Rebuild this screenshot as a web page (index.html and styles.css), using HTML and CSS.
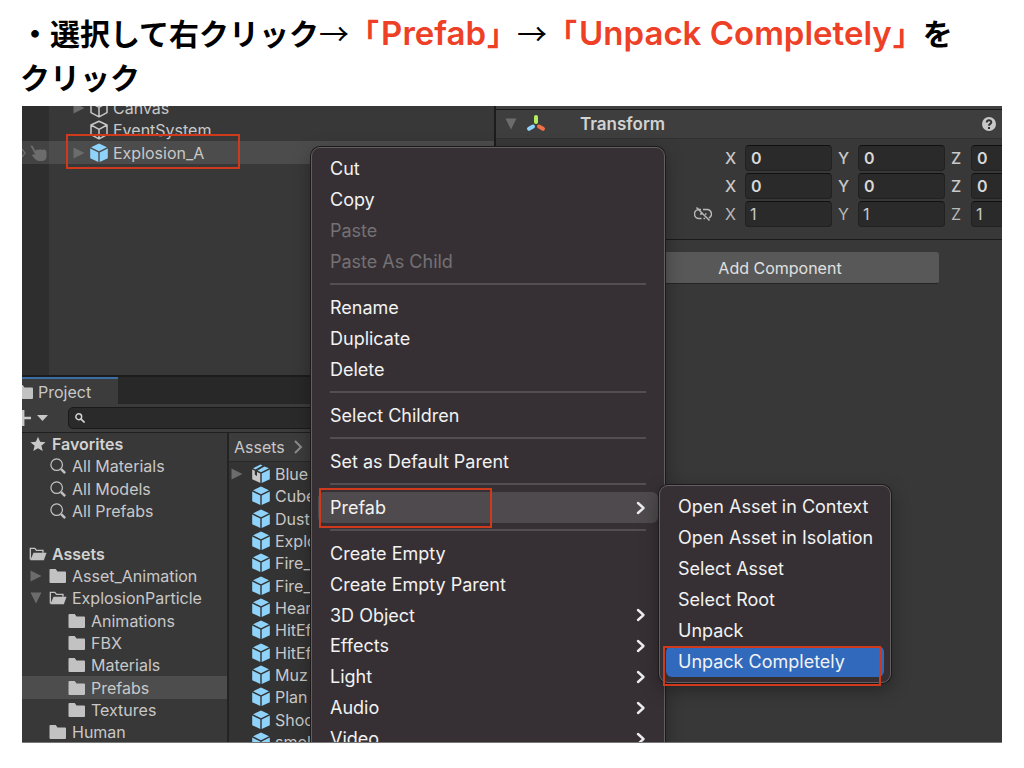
FILE: index.html
```html
<!DOCTYPE html>
<html lang="ja">
<head>
<meta charset="utf-8">
<meta name="viewport" content="width=device-width, initial-scale=1">
<title>Prefab Unpack</title>
<link rel="stylesheet" href="styles.css">
</head>
<body>
<svg class="sprite" aria-hidden="true">
  <symbol id="cube" viewBox="0 0 18 20"><path fill="#8fd3fb" d="M9 .5 17 4.3 9 8.2 1 4.3zM.2 5.6 8.3 9.5V19L.2 15.2zM17.8 5.6 9.7 9.5V19l8.1-3.8z"/></symbol>
  <symbol id="cube-line" viewBox="0 0 18 20"><path fill="none" stroke="#c8c8c8" stroke-width="1.5" stroke-linejoin="round" d="M9 1.2 17 5v9.6L9 18.8 1 14.6V5zM1 5l8 4.3L17 5M9 9.3v9.5"/></symbol>
  <symbol id="cube-model" viewBox="0 0 18 20"><path fill="#c8c8c8" d="M.2 5.600 2.800 6.800v4l2.200 1.200V8l3.300 1.500V19L.2 15.200z"/><path fill="#8fd3fb" d="M1 4.300 8.500.5l2 1L3.500 5.500zM5.500 6.400 12.500 2.400 17 4.300 9 8.200zM17.800 5.600 9.700 9.500V19l8.100-3.800z"/></symbol>
  <symbol id="folder" viewBox="0 0 18 16"><path fill="#c2c2c2" d="M1.500 1h5.200l1.800 2.500h7.500a1 1 0 0 1 1 1V14a1 1 0 0 1-1 1H1.500a1 1 0 0 1-1-1V2a1 1 0 0 1 1-1z"/></symbol>
  <symbol id="folder-open" viewBox="0 0 20 16"><path fill="none" stroke="#c2c2c2" stroke-width="1.500" d="M1.500 14V1.800h5l1.800 2.200h7.200v2.500"/><path fill="#c2c2c2" d="M5 6.500h14.500L16.500 15H1.500z"/></symbol>
  <symbol id="lens" viewBox="0 0 18 18"><circle cx="7.500" cy="7.500" r="6.500" fill="none" stroke="#c2c2c2" stroke-width="1.400"/><path stroke="#c2c2c2" stroke-width="2.800" d="m12.500 12.500 4.500 4.500"/></symbol>
  <symbol id="right" viewBox="0 0 12 12"><path fill="#6c6c6c" d="M.5.5 11.500 6 .5 11.500z"/></symbol>
  <symbol id="down" viewBox="0 0 12 12"><path fill="#6c6c6c" d="M.5.5h11L6 11.500z"/></symbol>
  <symbol id="chevron" viewBox="0 0 10 14"><path fill="none" stroke="#ececec" stroke-width="2.400" stroke-linecap="round" stroke-linejoin="round" d="m2 2 5.500 5L2 12"/></symbol>
</svg>

<h1 class="title">・選択して右クリック<span class="arrow">→</span><span class="key">「<span class="latin">Prefab</span>」</span><span class="arrow">→</span><span class="key">「<span class="latin">Unpack Completely</span>」</span>を<br>クリック</h1>

<main class="editor">
  <div class="left">
    <section class="hierarchy">
      <div class="row h-row"><span class="gutter"></span><svg class="tri"><use href="#right"/></svg><svg class="ico"><use href="#cube-line"/></svg>Canvas</div>
      <div class="row h-row"><span class="gutter"></span><span class="tri"></span><svg class="ico"><use href="#cube-line"/></svg>EventSystem</div>
      <div class="row h-row on"><span class="gutter"><svg width="28" height="20" viewBox="0 0 28 20"><path fill="none" stroke="#6c6c6c" stroke-width="1.400" d="m0 6 3 4-3 4"/><path fill="#6c6c6c" d="M8.500 3c1-1 2-.5 2.500.5l2.500 4.500 1-1.500 2 .5 1.500-1 1.500 1 2-.5c2 0 3 1 3 3v4c0 3-2 4.500-5 4.500h-2c-3 0-5-2-7.500-6 1-1 2-1 3.500 0z"/></svg></span><svg class="tri"><use href="#right"/></svg><svg class="ico"><use href="#cube"/></svg>Explosion_A</div>
    </section>

    <section class="project">
      <div class="tabs"><div class="tab"><svg class="tab-ico"><use href="#folder"/></svg>Project</div></div>
      <div class="toolbar">
        <button class="add" aria-label="Add"><svg width="28" height="18" viewBox="0 0 28 18"><path stroke="#c8c8c8" stroke-width="2.400" d="M0 9h9M1.200 1v16"/><path fill="#c8c8c8" d="M15 6h11l-5.500 6z"/></svg></button>
        <label class="search"><svg width="10" height="10" viewBox="0 0 12 12"><circle cx="4.500" cy="4.500" r="3.500" fill="none" stroke="#d0d0d0" stroke-width="1.800"/><path stroke="#d0d0d0" stroke-width="2" d="m7 7 4.500 4.500"/></svg><input type="text" aria-label="Search"></label>
      </div>
      <div class="panes">
        <div class="tree">
          <div class="row head"><svg class="ico" viewBox="0 0 18 18"><path fill="#c8c8c8" d="m9 .8 2.400 5.700 6.100.5-4.700 4 1.500 6L9 13.800 3.700 17l1.500-6L.5 7l6.100-.5z"/></svg>Favorites</div>
          <div class="row lv1"><svg class="ico"><use href="#lens"/></svg>All Materials</div>
          <div class="row lv1"><svg class="ico"><use href="#lens"/></svg>All Models</div>
          <div class="row lv1"><svg class="ico"><use href="#lens"/></svg>All Prefabs</div>
          <div class="row blank"></div>
          <div class="row head"><svg class="ico"><use href="#folder-open"/></svg>Assets</div>
          <div class="row lv1 fold"><svg class="tri"><use href="#right"/></svg><svg class="ico"><use href="#folder"/></svg>Asset_Animation</div>
          <div class="row lv1 fold"><svg class="tri"><use href="#down"/></svg><svg class="ico"><use href="#folder-open"/></svg>ExplosionParticle</div>
          <div class="row lv2"><svg class="ico"><use href="#folder"/></svg>Animations</div>
          <div class="row lv2"><svg class="ico"><use href="#folder"/></svg>FBX</div>
          <div class="row lv2"><svg class="ico"><use href="#folder"/></svg>Materials</div>
          <div class="row lv2 on"><svg class="ico"><use href="#folder"/></svg>Prefabs</div>
          <div class="row lv2"><svg class="ico"><use href="#folder"/></svg>Textures</div>
          <div class="row lv1"><svg class="ico"><use href="#folder"/></svg>Human</div>
        </div>
        <div class="assets">
          <div class="crumb">Assets <svg width="10" height="14" viewBox="0 0 10 14"><path fill="none" stroke="#8c8c8c" stroke-width="2" d="m2 1 6 6-6 6"/></svg></div>
          <div class="list">
            <div class="row"><svg class="tri"><use href="#right"/></svg><svg class="ico"><use href="#cube-model"/></svg>Blue</div>
            <div class="row"><span class="tri"></span><svg class="ico"><use href="#cube"/></svg>Cube</div>
            <div class="row"><span class="tri"></span><svg class="ico"><use href="#cube"/></svg>Dust</div>
            <div class="row"><span class="tri"></span><svg class="ico"><use href="#cube"/></svg>Explo</div>
            <div class="row"><span class="tri"></span><svg class="ico"><use href="#cube"/></svg>Fire_</div>
            <div class="row"><span class="tri"></span><svg class="ico"><use href="#cube"/></svg>Fire_</div>
            <div class="row"><span class="tri"></span><svg class="ico"><use href="#cube"/></svg>Hear</div>
            <div class="row"><span class="tri"></span><svg class="ico"><use href="#cube"/></svg>HitEf</div>
            <div class="row"><span class="tri"></span><svg class="ico"><use href="#cube"/></svg>HitEf</div>
            <div class="row"><span class="tri"></span><svg class="ico"><use href="#cube"/></svg>Muz</div>
            <div class="row"><span class="tri"></span><svg class="ico"><use href="#cube"/></svg>Plan</div>
            <div class="row"><span class="tri"></span><svg class="ico"><use href="#cube"/></svg>Shoo</div>
            <div class="row"><span class="tri"></span><svg class="ico"><use href="#cube"/></svg>smol</div>
          </div>
        </div>
      </div>
    </section>
  </div>

  <section class="inspector">
    <header class="component">
      <svg class="tri"><use href="#down"/></svg>
      <svg class="axes" width="20" height="20" viewBox="0 0 20 20"><g stroke-width="4" stroke-linecap="round"><path stroke="#b5ee5c" d="M10 3v5"/><path stroke="#8fd3fb" d="m7 12.500-4 2.300"/><path stroke="#f07048" d="m13 12.500 4 2.300"/></g></svg>
      <h2>Transform</h2>
      <svg class="help" width="14" height="14" viewBox="0 0 14 14"><circle cx="7" cy="7" r="7" fill="#c8c8c8"/><path fill="none" stroke="#333" stroke-width="2" d="M4.700 5.500c0-3 4.600-3 4.600-.3C9.300 7 7 6.800 7 8.800M7 10v2"/></svg>
    </header>
    <div class="fields">
      <div class="vec strong"><span class="link"></span>
        <label>X<input value="0"></label><label>Y<input value="0"></label><label>Z<input value="0"></label></div>
      <div class="vec strong"><span class="link"></span>
        <label>X<input value="0"></label><label>Y<input value="0"></label><label>Z<input value="0"></label></div>
      <div class="vec"><svg class="link" viewBox="0 0 18 14"><path fill="none" stroke="#b8b8b8" stroke-width="1.500" d="M7 2.500H5a4.500 4.500 0 0 0 0 9h2.500M9 2.500h4a4.500 4.500 0 0 1 2 8.500M11 11.500H9.500M6 7h2M11 7h1.500M2.500.5l13 13"/></svg>
        <label>X<input value="1"></label><label>Y<input value="1"></label><label>Z<input value="1"></label></div>
    </div>
    <button class="add-component">Add Component</button>
  </section>

  <div class="menu context" role="menu">
    <button role="menuitem">Cut</button>
    <button role="menuitem">Copy</button>
    <button role="menuitem" disabled>Paste</button>
    <button role="menuitem" disabled>Paste As Child</button>
    <hr>
    <button role="menuitem">Rename</button>
    <button role="menuitem">Duplicate</button>
    <button role="menuitem">Delete</button>
    <hr>
    <button role="menuitem">Select Children</button>
    <hr>
    <button role="menuitem">Set as Default Parent</button>
    <hr>
    <button role="menuitem" class="open">Prefab<svg><use href="#chevron"/></svg></button>
    <hr>
    <button role="menuitem">Create Empty</button>
    <button role="menuitem">Create Empty Parent</button>
    <button role="menuitem">3D Object<svg><use href="#chevron"/></svg></button>
    <button role="menuitem">Effects<svg><use href="#chevron"/></svg></button>
    <button role="menuitem">Light<svg><use href="#chevron"/></svg></button>
    <button role="menuitem">Audio<svg><use href="#chevron"/></svg></button>
    <button role="menuitem">Video<svg><use href="#chevron"/></svg></button>
  </div>

  <div class="menu submenu" role="menu">
    <button role="menuitem">Open Asset in Context</button>
    <button role="menuitem">Open Asset in Isolation</button>
    <button role="menuitem">Select Asset</button>
    <button role="menuitem">Select Root</button>
    <button role="menuitem">Unpack</button>
    <button role="menuitem" class="active">Unpack Completely</button>
  </div>

  <div class="mark mark-object"></div>
  <div class="mark mark-prefab"></div>
  <div class="mark mark-unpack"></div>
</main>
</body>
</html>
```
FILE: styles.css
```css
* { box-sizing: border-box; }

body {
  margin: 0;
  padding: 10px 22px 25px;
  height: 100vh;
  display: flex;
  flex-direction: column;
  background: #fff;
  font-family: Inter, "Noto Sans CJK JP", sans-serif;
}

button, input { font: inherit; color: inherit; }
svg { flex: none; }
.sprite { position: absolute; width: 0; height: 0; }

.title {
  margin: 0 0 0 -2px;
  height: 96px;
  font: 700 30px/44px "Noto Sans CJK JP", sans-serif;
  color: #000;
  white-space: nowrap;
}
.arrow { font-weight: 400; }
.key { color: #ee4026; }
.latin { margin: 0 1px 0 2px; font-family: Inter, sans-serif; font-size: 33px; font-weight: 600; line-height: 1; }

.editor {
  flex: 1;
  min-height: 0;
  position: relative;
  overflow: hidden;
  display: grid;
  grid-template-columns: 474px 1fr;
  grid-template-rows: 100%;
  background: #383838;
  color: #c8c8c8;
  font-size: 16px;
  border-bottom: 1px solid #777;
}

.left { display: flex; flex-direction: column; min-height: 0; border-right: 2px solid #1c1c1c; }

.row { height: 22px; display: flex; align-items: center; white-space: nowrap; }
.row:nth-child(3n) { height: 23px; }
.ico { width: 18px; height: 20px; }
.tri { width: 12px; height: 12px; flex: none; }

.hierarchy {
  height: 271px;
  flex: none;
  overflow: hidden;
  background: linear-gradient(to right, #2e2e2e 27px, #383838 27px);
  border-bottom: 2px solid #1c1c1c;
}
.h-row { gap: 5px; }
.h-row:first-child { margin-top: -9px; }
.h-row .tri { margin-left: 18px; }
.h-row.on { background: rgba(255, 255, 255, 0.1); }
.gutter { width: 28px; height: 20px; flex: none; }

.project { flex: 1; min-height: 0; display: flex; flex-direction: column; }
.tabs { height: 27px; flex: none; display: flex; background: #282828; }
.tab {
  width: 96px;
  display: flex;
  align-items: center;
  gap: 4px;
  background: #3c3c3c;
  border-top: 2px solid #3a6ea5;
  overflow: hidden;
}
.tab-ico { width: 18px; height: 16px; margin-left: -6px; }
.toolbar { height: 29px; flex: none; display: flex; align-items: center; gap: 18px; background: #3c3c3c; border-bottom: 1px solid #1f1f1f; }
.add { padding: 0; border: 0; background: none; display: flex; }
.search {
  flex: 1;
  height: 22px;
  display: flex;
  align-items: center;
  gap: 6px;
  padding-left: 6px;
  background: #2a2a2a;
  border: 1px solid #1a1a1a;
  border-radius: 5px;
}
.search input { flex: 1; min-width: 0; border: 0; background: none; padding: 0; }

.panes { flex: 1; min-height: 0; display: grid; grid-template-columns: 205px 1fr; overflow: hidden; }
.tree .ico { height: 16px; }
.tree .row { gap: 5px; }
.tree .blank { height: 20px; }
.tree .head { padding-left: 7px; font-weight: 600; color: #d2d2d2; }
.tree .lv1 { padding-left: 27px; }
.tree .fold { padding-left: 8px; }
.tree .fold .tri { margin-right: 2px; }
.tree .lv2 { padding-left: 46px; }
.tree .on { background: #4d4d4d; }
.assets { border-left: 2px solid #232323; background: #333; overflow: hidden; }
.crumb { height: 29px; padding-left: 5px; display: flex; align-items: center; gap: 8px; background: #3c3c3c; border-bottom: 1px solid #282828; }
.list { padding-top: 1px; }
.list .row { padding-left: 2px; gap: 5px; }
.list .ico { margin-left: 4px; }

.inspector { min-width: 0; overflow: hidden; border-top: 3px solid #404040; }
.component {
  height: 30px;
  display: flex;
  align-items: center;
  padding: 0 6px 0 9px;
  background: #3e3e3e;
  border-top: 1px solid #1a1a1a;
  border-bottom: 1px solid #303030;
}
.axes { margin-left: 9px; }
.component h2 { flex: 1; margin: 0 0 0 34px; font-size: 17px; font-weight: 600; color: #d2d2d2; }
.fields { height: 101px; padding: 5px 0 0 198px; border-bottom: 1px solid #1a1a1a; }
.vec { height: 28px; display: flex; align-items: center; color: #b8b8b8; }
.link { width: 18px; height: 14px; flex: none; margin-right: 13px; }
.vec label { flex: none; width: 113px; display: flex; align-items: center; justify-content: space-between; padding-right: 6px; }
.vec input {
  width: 87px;
  height: 26px;
  padding: 0 4px;
  background: #2a2a2a;
  border: 1px solid #212121;
  border-top-color: #111;
  border-radius: 4px;
  color: #c8c8c8;
}
.strong { font-weight: 500; color: #c8c8c8; }
.strong input { padding: 0 5px; font-weight: 600; color: #d8d8d8; }
.add-component {
  display: block;
  width: 318px;
  height: 32px;
  margin: 12px 0 0 125px;
  border: 1px solid #585858;
  border-bottom-color: #242424;
  border-radius: 3px;
  background: #585858;
  color: #e0e0e0;
}

.menu {
  position: absolute;
  padding: 5px 6px;
  display: flex;
  flex-direction: column;
  background: #363034;
  border: 1px solid #625e61;
  border-radius: 9px;
  box-shadow: 0 0 0 1px #1c1a1b, 0 6px 18px rgba(0, 0, 0, 0.35);
  font-size: 18px;
  font-weight: 400;
  color: #f2f2f2;
}
.menu button {
  flex: none;
  height: 31px;
  padding: 0 12px;
  display: flex;
  align-items: center;
  justify-content: space-between;
  border: 0;
  border-radius: 6px;
  background: none;
  text-align: left;
  white-space: nowrap;
}
.menu button:nth-child(18n) { height: 30px; }
.menu button:disabled { color: #747073; }
.menu svg { width: 10px; height: 14px; }
.menu hr { flex: none; width: 316px; height: 2px; margin: 6px 12px 7px; border: 0; background: #524e51; }
.menu .open { background: #4e4a4d; }
.menu .active { background: #3169bd; }
.context { left: 289px; top: 41px; width: 354px; }
.submenu { left: 637px; top: 379px; width: 232px; }

.mark { position: absolute; border: 2px solid #cf3a1d; }
.mark-object { left: 44px; top: 28px; width: 174px; height: 35px; }
.mark-prefab { left: 297px; top: 382px; width: 173px; height: 40px; }
.mark-unpack { left: 641px; top: 540px; width: 218px; height: 40px; }
```
